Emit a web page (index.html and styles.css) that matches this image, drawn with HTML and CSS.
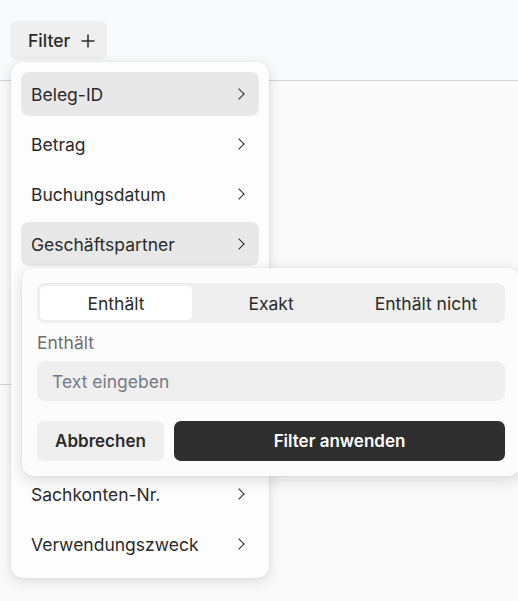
FILE: index.html
```html
<!DOCTYPE html>
<html lang="de">
<head>
    <meta charset="UTF-8">
    <meta name="viewport" content="width=device-width, initial-scale=1.0">
    <title>Belege</title>
    <link rel="stylesheet" href="styles.css">
</head>
<body>
<div class="toolbar">
    <button class="filter-btn">
        Filter
        <svg width="14" height="14" viewBox="0 0 14 14" fill="none" stroke="#2b2b2b" stroke-width="1.5">
            <path d="M7 0.5v13M0.5 7h13"/>
        </svg>
    </button>
</div>
<div class="content">
    <div class="table-head"></div>
</div>

<div class="menu">
    <div class="menu-item active">Beleg-ID <span class="chev"></span></div>
    <div class="menu-item">Betrag <span class="chev"></span></div>
    <div class="menu-item">Buchungsdatum <span class="chev"></span></div>
    <div class="menu-item active">Geschäftspartner <span class="chev"></span></div>
    <div class="menu-item">Kostenstelle <span class="chev"></span></div>
    <div class="menu-item">Rechnungsnummer <span class="chev"></span></div>
    <div class="menu-item">Rechnungsdatum <span class="chev"></span></div>
    <div class="menu-item">Sachkonto <span class="chev"></span></div>
    <div class="menu-item">Sachkonten-Nr. <span class="chev"></span></div>
    <div class="menu-item">Verwendungszweck <span class="chev"></span></div>
</div>

<div class="popover">
    <div class="segments">
        <div class="segment selected">Enthält</div>
        <div class="segment">Exakt</div>
        <div class="segment">Enthält nicht</div>
    </div>
    <label class="field-label" for="filter-text">Enthält</label>
    <input class="field" id="filter-text" type="text" placeholder="Text eingeben">
    <div class="actions">
        <button class="btn btn-cancel">Abbrechen</button>
        <button class="btn btn-apply">Filter anwenden</button>
    </div>
</div>
</body>
</html>
```

FILE: styles.css
```css
html, body {
    margin: 0;
    padding: 0;
    height: 100%;
    overflow: hidden;
}

body {
    font-family: Inter, "Noto Sans", sans-serif;
    font-size: 17.5px;
    color: #2b2b2b;
    background: #fafafa;
    position: relative;
}

.toolbar {
    height: 81px;
    box-sizing: border-box;
    padding: 21px 10px 0;
    background: #f9fafb;
    border-bottom: 1px solid #d4d6da;
}

.filter-btn {
    display: flex;
    align-items: center;
    gap: 11px;
    height: 39px;
    padding: 0 12px 0 18px;
    border: none;
    border-radius: 7px;
    background: #efefef;
    font-family: inherit;
    font-size: 17.5px;
    font-weight: 500;
    color: #2b2b2b;
}

.content {
    padding-top: 303px;
}

.table-head {
    border-bottom: 1px solid #d4d6da;
}

.menu {
    position: absolute;
    left: 11px;
    top: 62px;
    width: 258px;
    box-sizing: border-box;
    padding: 10px 10px 12px;
    display: flex;
    flex-direction: column;
    gap: 6px;
    background: #fdfdfd;
    border-radius: 12px;
    box-shadow: 0 3px 14px rgba(0, 0, 0, 0.13), 0 0 0 1px rgba(0, 0, 0, 0.03);
}

.menu-item {
    height: 44px;
    display: flex;
    align-items: center;
    justify-content: space-between;
    padding: 0 16px 0 10px;
    border-radius: 8px;
}

.menu-item.active {
    background: #e8e8e8;
}

.chev {
    width: 7px;
    height: 7px;
    border-top: 1.5px solid #2b2b2b;
    border-right: 1.5px solid #2b2b2b;
    transform: rotate(45deg);
}

.popover {
    position: absolute;
    left: 22px;
    top: 268px;
    width: 498px;
    box-sizing: border-box;
    padding: 15px;
    display: flex;
    flex-direction: column;
    background: #fcfcfc;
    border-radius: 12px;
    box-shadow: 0 4px 16px rgba(0, 0, 0, 0.14), 0 0 0 1px rgba(0, 0, 0, 0.03);
}

.segments {
    display: grid;
    grid-template-columns: 1fr 1fr 1fr;
    gap: 3px;
    padding: 3px;
    height: 40px;
    box-sizing: border-box;
    background: #efefef;
    border-radius: 8px;
    width: 468px;
}

.segment {
    display: flex;
    align-items: center;
    justify-content: center;
    border-radius: 5px;
}

.segment.selected {
    background: #ffffff;
}

.field-label {
    margin-top: 10px;
    line-height: 20px;
    color: #707070;
}

.field {
    margin-top: 8px;
    width: 468px;
    height: 40px;
    box-sizing: border-box;
    padding: 0 15px;
    border: none;
    border-radius: 8px;
    background: #efefef;
    font-family: inherit;
    font-size: 17.5px;
    color: #2b2b2b;
}

.field::placeholder {
    color: #757985;
}

.actions {
    margin-top: 20px;
    width: 468px;
    display: flex;
    gap: 10px;
}

.btn {
    height: 40px;
    border: none;
    border-radius: 7px;
    font-family: inherit;
    font-size: 17px;
    font-weight: 600;
}

.btn-cancel {
    width: 127px;
    background: #efefef;
    color: #2b2b2b;
}

.btn-apply {
    flex: 1;
    background: #2e2e2e;
    color: #ffffff;
}
```
